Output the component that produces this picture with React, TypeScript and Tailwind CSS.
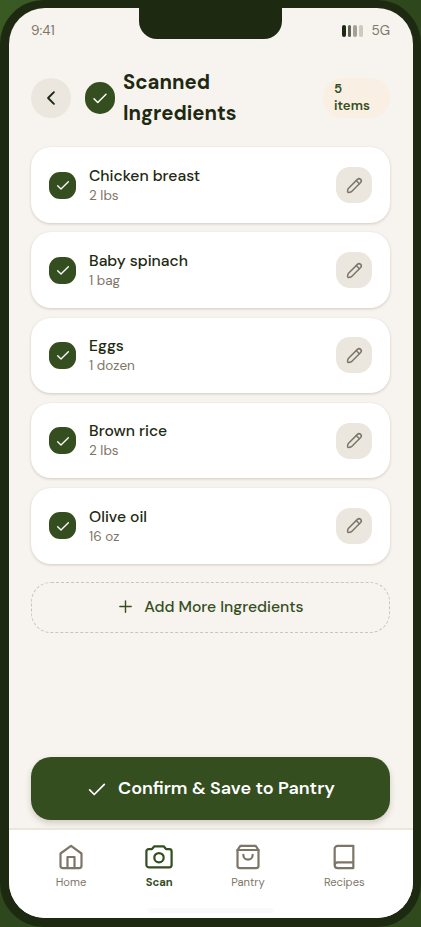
import type { ReactNode } from "react";

type IconProps = { className?: string; strokeWidth?: number; children?: ReactNode };

function Icon({ className, strokeWidth = 1.9, children }: IconProps) {
  return (
    <svg
      className={className}
      viewBox="0 0 24 24"
      fill="none"
      stroke="currentColor"
      strokeWidth={strokeWidth}
      strokeLinecap="round"
      strokeLinejoin="round"
    >
      {children}
    </svg>
  );
}

function Check({ className, strokeWidth = 2 }: IconProps) {
  return (
    <Icon className={className} strokeWidth={strokeWidth}>
      <path d="M4 13l5 5L20 7" />
    </Icon>
  );
}

function Pencil() {
  return (
    <Icon className="h-[19px] w-[19px]" strokeWidth={1.9}>
      <path d="M3.6 20.4c-.8-.8-.2-3.6.9-4.9L15.7 4.3a2.8 2.8 0 0 1 4 4L8.5 19.5c-1.3 1.1-4.1 1.7-4.9.9z" />
      <path d="M14.2 5.8l4 4" />
    </Icon>
  );
}

const ingredients = [
  { name: "Chicken breast", amount: "2 lbs" },
  { name: "Baby spinach", amount: "1 bag" },
  { name: "Eggs", amount: "1 dozen" },
  { name: "Brown rice", amount: "2 lbs" },
  { name: "Olive oil", amount: "16 oz" },
];

function IngredientCard({ name, amount }: { name: string; amount: string }) {
  return (
    <li className="flex h-[75.6px] items-center rounded-[20px] bg-white px-[18px] shadow-[0_1px_3px_rgba(60,45,30,0.2)]">
      <span className="flex h-[27px] w-[27px] items-center justify-center rounded-[11px] bg-[#344e1f] text-white">
        <Check className="h-4 w-4" />
      </span>
      <div className="ml-[13px] flex-1">
        <p className="text-[15.7px] leading-[22px] font-medium text-[#1d2911]">{name}</p>
        <p className="text-[13.5px] leading-[18.6px] text-[#7d7668]">{amount}</p>
      </div>
      <button className="flex h-9 w-9 items-center justify-center rounded-[14px] bg-[#ebe7df] text-[#7d7668]">
        <Pencil />
      </button>
    </li>
  );
}

const tabs = [
  {
    label: "Home",
    width: "w-[89px]",
    icon: (
      <>
        <path d="M3 9L12 2.4 21 9v10.5a2 2 0 0 1-2 2H5a2 2 0 0 1-2-2z" />
        <path d="M9 21.5V12h6v9.5" />
      </>
    ),
  },
  {
    label: "Scan",
    width: "w-[87.5px]",
    active: true,
    icon: (
      <>
        <path d="M1.2 7.2a2 2 0 0 1 2-2H6l2-2.4h8l2 2.4h2.8a2 2 0 0 1 2 2v11.6a2 2 0 0 1-2 2H3.2a2 2 0 0 1-2-2z" />
        <circle cx="12" cy="12.6" r="4" />
      </>
    ),
  },
  {
    label: "Pantry",
    width: "w-[90px]",
    icon: (
      <>
        <path d="M3 6l2.4-3.6h13.2L21 6v13.5a2 2 0 0 1-2 2H5a2 2 0 0 1-2-2z" />
        <path d="M3 6h18M16 10.2a4 4 0 0 1-8 0" />
      </>
    ),
  },
  {
    label: "Recipes",
    width: "w-[102.5px]",
    icon: <path d="M4 19V5a2.6 2.6 0 0 1 2.6-2.6H20v19.1H6.5a2.45 2.45 0 0 1 0-4.9H20" />,
  },
];

export default function App() {
  return (
    <div className="h-[927px] w-[421px] overflow-hidden bg-linear-to-br from-[#3a5a24] via-[#2f471c] to-[#30491d] font-['DM_Sans',Inter,sans-serif]">
      <div className="h-full rounded-[44px] bg-[#1d2911] px-[8.5px] pt-[8.3px] pb-[8.7px]">
        <div className="relative flex h-full flex-col overflow-hidden rounded-[36px] bg-[#f7f3ee]">
          <div className="absolute -top-px left-[130px] h-[31.7px] w-[143.5px] rounded-b-[18px] bg-[#1d2911]" />

          {/* Status bar */}
          <div className="flex h-[45px] items-center justify-between px-[22.5px] text-[13.5px] text-[#7d7668]">
            <span>9:41</span>
            <div className="flex items-center">
              <div className="mr-[9px] flex gap-[1.8px]">
                <i className="h-[11.5px] w-[3.8px] rounded-full bg-[#1d2911]" />
                <i className="h-[11.5px] w-[3.8px] rounded-full bg-[#1d2911]/70" />
                <i className="h-[11.5px] w-[3.8px] rounded-full bg-[#1d2911]/40" />
                <i className="h-[11.5px] w-[3.8px] rounded-full bg-[#1d2911]/20" />
              </div>
              <span>5G</span>
            </div>
          </div>

          {/* Header */}
          <header className="mt-[13.4px] flex h-[62px] items-center px-[22.5px]">
            <button className="flex h-10 w-10 items-center justify-center rounded-full bg-[#ebe7df] text-[#1d2911]">
              <Icon className="h-5 w-5" strokeWidth={2.3}>
                <path d="M15.5 5l-7 7 7 7" />
              </Icon>
            </button>
            <span className="ml-[14px] flex h-8 w-[30px] items-center justify-center rounded-full bg-[#344e1f] text-white">
              <Check className="h-[18px] w-[18px]" />
            </span>
            <h1 className="mt-px ml-2 w-[150px] text-[20.3px] leading-[31px] font-bold text-[#1d2911]">
              Scanned
              <br />
              Ingredients
            </h1>
            <span className="ml-auto h-10 w-[67px] rounded-[20px] bg-[#f9f0e3] pt-[2px] pl-[11px] text-[13.2px] leading-[17.5px] font-semibold text-[#344e1f]">
              5<br />
              items
            </span>
          </header>

          <main className="flex flex-1 flex-col px-[22.5px] pt-[18.6px]">
            <ul className="flex flex-col gap-[9.6px]">
              {ingredients.map((item) => (
                <IngredientCard key={item.name} name={item.name} amount={item.amount} />
              ))}
            </ul>

            <button className="mt-[18.2px] flex h-[51px] items-center justify-center rounded-[20px] border border-dashed border-[#c4c8b7] pb-px text-[15.7px] font-medium text-[#344e1f]">
              <Icon className="mr-[10px] h-[17px] w-[17px]" strokeWidth={2}>
                <path d="M12 4v16M4 12h16" />
              </Icon>
              Add More Ingredients
            </button>

            <button className="mt-auto mb-2 flex h-[63px] items-center justify-center rounded-[20px] bg-[#344e1f] text-[18px] font-semibold text-white shadow-[0_3px_6px_rgba(60,45,30,0.2)]">
              <Check className="mr-[10px] h-[22px] w-[22px]" strokeWidth={1.9} />
              Confirm &amp; Save to Pantry
            </button>
          </main>

          <nav className="relative flex h-[90px] shrink-0 border-t-2 border-[#ebe7df] bg-white pl-[18px] text-[11.2px] text-[#7d7668]">
            {tabs.map((tab) => (
              <a
                key={tab.label}
                className={`flex flex-col items-center pt-[13px] ${tab.width} ${
                  tab.active ? "font-bold text-[#344e1f]" : ""
                }`}
              >
                <Icon className="h-7 w-7">{tab.icon}</Icon>
                <span className="mt-[3px]">{tab.label}</span>
              </a>
            ))}
            {/* Home indicator */}
            <div className="absolute bottom-[5px] left-[139px] h-[5px] w-[126px] rounded-full bg-[#fafafa]" />
          </nav>
        </div>
      </div>
    </div>
  );
}
